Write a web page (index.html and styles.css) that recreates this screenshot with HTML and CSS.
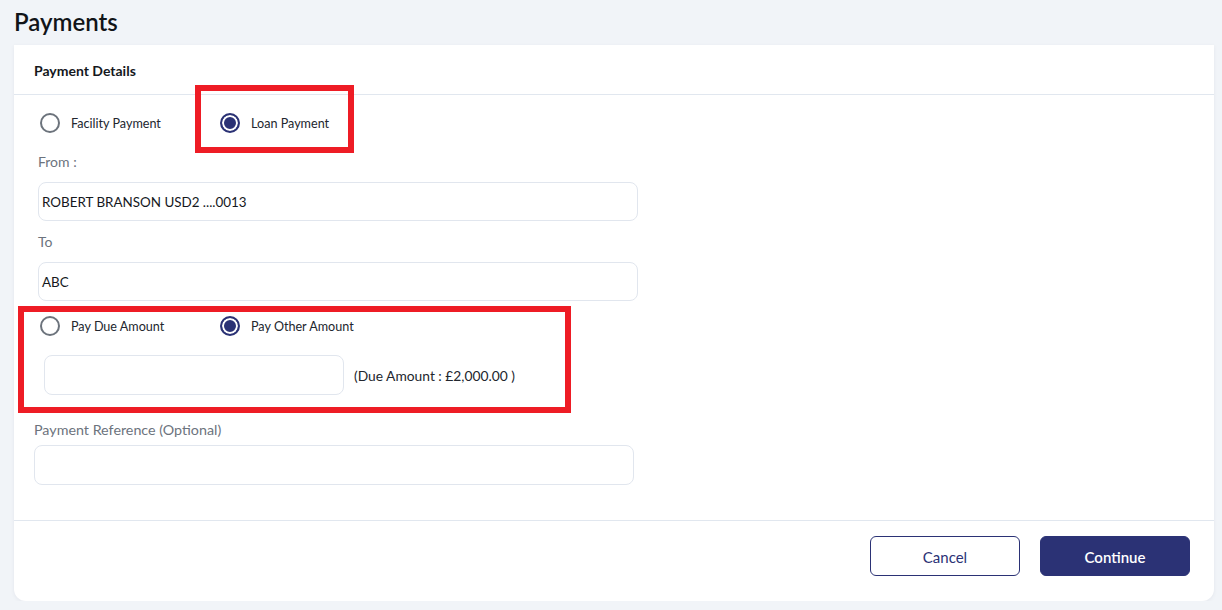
FILE: index.html
```html
<!DOCTYPE html>
<html>
<head>
<meta charset="utf-8">
<link rel="stylesheet" href="styles.css">
</head>
<body>
<div class="page">
  <h1 class="title">Payments</h1>
  <div class="card">
    <div class="card-header">Payment Details</div>
    <div class="card-body">
      <div class="radio-row">
        <label class="radio"><span class="dot"></span><span class="rlabel">Facility Payment</span></label>
        <label class="radio checked"><span class="dot"></span><span class="rlabel">Loan Payment</span></label>
      </div>
      <div class="group">
        <div class="label">From :</div>
        <div class="input">ROBERT BRANSON USD2 ....0013</div>
        <div class="label label-to">To</div>
        <div class="input">ABC</div>
      </div>
      <div class="radio-row radio-row-2">
        <label class="radio"><span class="dot"></span><span class="rlabel">Pay Due Amount</span></label>
        <label class="radio checked"><span class="dot"></span><span class="rlabel">Pay Other Amount</span></label>
      </div>
      <div class="amount-row">
        <div class="input input-amount"></div>
        <span class="due">(Due Amount : £2,000.00 )</span>
      </div>
      <div class="label label-ref">Payment Reference (Optional)</div>
      <div class="input input-ref"></div>
    </div>
    <div class="card-footer">
      <button class="btn btn-outline">Cancel</button>
      <button class="btn btn-primary">Continue</button>
    </div>
    <div class="annot annot-1"></div>
    <div class="annot annot-2"></div>
  </div>
</div>
</body>
</html>
```
FILE: styles.css
```css
html, body {
  margin: 0;
  padding: 0;
  background: #f1f4f8;
  font-family: Lato, "Noto Sans", sans-serif;
  color: #1f2430;
}
.page {
  padding: 0 8px 0 14px;
}
.title {
  margin: 0;
  height: 45px;
  line-height: 44px;
  font-size: 24px;
  font-weight: 600;
  color: #111418;
}
.card {
  position: relative;
  background: #fff;
  border-radius: 0 0 12px 12px;
  box-shadow: 0 1px 4px rgba(30, 40, 70, 0.06);
  height: 556px;
  display: flex;
  flex-direction: column;
}
.card-header {
  height: 49px;
  line-height: 52px;
  padding-left: 20px;
  font-size: 14px;
  font-weight: 700;
  color: #15181d;
  border-bottom: 1px solid #e1e7ef;
}
.card-body {
  padding: 18px 20px 35px 20px;
}
.radio-row {
  display: flex;
  height: 20px;
  padding-left: 6px;
}
.radio {
  display: flex;
  align-items: center;
  width: 180px;
  font-size: 12.6px;
  color: #22262e;
}
.dot {
  box-sizing: border-box;
  width: 20px;
  height: 20px;
  border-radius: 50%;
  border: 2px solid #6c737c;
  margin-right: 11px;
  flex: none;
}
.radio.checked .dot {
  border-color: #2b3275;
  background: #2b3275;
  box-shadow: inset 0 0 0 2px #fff;
}
.group {
  padding-left: 4px;
}
.label {
  font-size: 14px;
  line-height: 20px;
  color: #6c737d;
}
.group .label {
  margin-top: 19px;
  margin-bottom: 10px;
}
.group .label-to {
  margin-top: 11px;
}
.input {
  box-sizing: border-box;
  width: 600px;
  height: 39px;
  border: 1px solid #e1e6ee;
  border-radius: 8px;
  padding-left: 3px;
  font-size: 13.4px;
  line-height: 39px;
  color: #15181d;
}
.radio-row-2 {
  margin-top: 15px;
}
.amount-row {
  display: flex;
  align-items: center;
  margin-top: 19px;
  padding-left: 10px;
}
.input-amount {
  width: 300px;
  height: 40px;
}
.due {
  margin-left: 10px;
  font-size: 13.8px;
  color: #22262e;
}
.label-ref {
  margin-top: 25px;
  font-size: 14.3px;
}
.input-ref {
  margin-top: 5px;
  height: 40px;
}
.card-footer {
  flex: 1;
  border-top: 1px solid #e1e7ef;
  display: flex;
  justify-content: flex-end;
  align-items: flex-start;
  gap: 20px;
  padding: 15px 24px 0 0;
}
.btn {
  box-sizing: border-box;
  width: 150px;
  height: 40px;
  padding-top: 2px;
  border-radius: 6px;
  font-family: Lato, "Noto Sans", sans-serif;
  font-size: 15px;
  cursor: pointer;
}
.btn-outline {
  background: #fff;
  border: 1px solid #2b3275;
  color: #2b3275;
}
.btn-primary {
  background: #2b3275;
  border: 1px solid #2b3275;
  color: #fff;
  font-weight: 600;
}
.annot {
  position: absolute;
  box-sizing: border-box;
  border: 6px solid #ee1c25;
}
.annot-1 {
  left: 181px;
  top: 40px;
  width: 159px;
  height: 68px;
}
.annot-2 {
  left: 4px;
  top: 261px;
  width: 553px;
  height: 107px;
}
```
